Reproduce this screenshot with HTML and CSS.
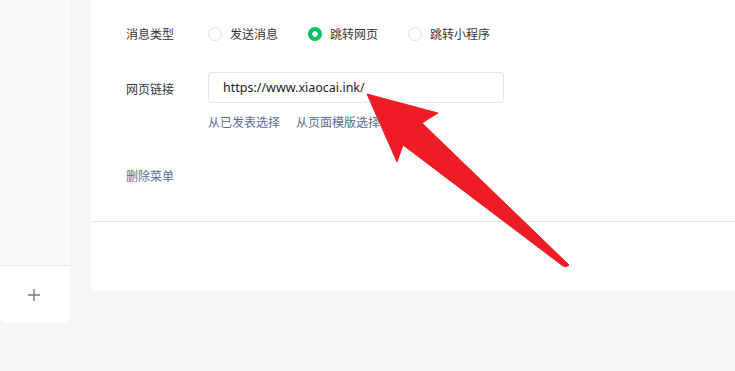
FILE: index.html
```html
<!DOCTYPE html>
<html lang="zh-CN">
<head>
    <meta charset="UTF-8">
    <meta name="viewport" content="width=device-width, initial-scale=1.0">
    <title>菜单设置</title>
    <link rel="stylesheet" href="styles.css">
</head>
<body>

<div class="page">
    <!-- 左侧菜单列 -->
    <div class="side">
        <div class="side-top"></div>
        <div class="side-add">
            <svg width="14" height="14" viewBox="0 0 14 14">
                <path d="M7 1v12M1 7h12" stroke="#7a7a7a" stroke-width="1.4" fill="none"/>
            </svg>
        </div>
    </div>

    <!-- 菜单内容编辑 -->
    <div class="card">
        <div class="form">
            <div class="row">
                <span class="label">消息类型</span>
                <div class="radios">
                    <label class="radio"><i class="dot"></i>发送消息</label>
                    <label class="radio checked"><i class="dot"></i>跳转网页</label>
                    <label class="radio"><i class="dot"></i>跳转小程序</label>
                </div>
            </div>
            <div class="row row-url">
                <span class="label label-url">网页链接</span>
                <div class="input">https://www.xiaocai.ink/</div>
            </div>
            <div class="links">
                <a class="link">从已发表选择</a>
                <a class="link">从页面模版选择</a>
            </div>
            <a class="link delete">删除菜单</a>
        </div>
        <div class="card-foot"></div>
    </div>
</div>

<!-- 标注箭头 -->
<svg class="arrow" width="735" height="371" viewBox="0 0 735 371">
    <path d="M367 94 L438 113 L422 123 L569 265 Q566 268 563 266 L403 145 L397 162 Z" fill="#ee1d25" stroke="#ee1d25" stroke-width="1" stroke-linejoin="round"/>
</svg>

</body>
</html>
```

FILE: styles.css
```css
/* 全局 */
body {
    margin: 0;
    background-color: #f5f6f7;
    font-family: "Noto Sans", "Noto Sans CJK SC", sans-serif;
    font-size: 12px;
    color: #353535;
}

.page {
    display: flex;
    align-items: flex-start;
}

/* 左侧菜单列 */
.side {
    width: 70px;
    margin-right: 21px;
    background-color: #fff;
    border-radius: 0 0 6px 6px;
    overflow: hidden;
}

.side-top {
    height: 265px;
    background-color: #fafafa;
    border-bottom: 1px solid #ebebeb;
}

.side-add {
    height: 57px;
    display: flex;
    align-items: center;
    justify-content: center;
    padding-right: 2px;
}

/* 编辑区 */
.card {
    flex: 1;
    height: 291px;
    background-color: #fff;
    border-radius: 0 0 0 6px;
}

.form {
    padding: 24px 0 35px 35px;
    border-bottom: 1px solid #e7e7eb;
}

.row {
    display: flex;
    align-items: center;
    height: 20px;
}

.row-url {
    height: 31px;
    margin-top: 28px;
}

.label {
    width: 82px;
    flex-shrink: 0;
}

.label-url {
    padding-top: 3px;
}

.radios {
    display: flex;
    gap: 30px;
}

.radio {
    display: flex;
    align-items: center;
    gap: 8px;
}

.dot {
    width: 12px;
    height: 12px;
    border: 1px solid #e0e0e0;
    border-radius: 50%;
    box-sizing: content-box;
}

.radio.checked .dot {
    width: 14px;
    height: 14px;
    border: none;
    background: radial-gradient(circle, #fff 0 2.5px, #07c160 3px);
}

.input {
    width: 280px;
    height: 29px;
    line-height: 29px;
    padding-left: 14px;
    border: 1px solid #e4e8eb;
    border-radius: 3px;
    font-size: 12.5px;
    color: #222;
}

.links {
    display: flex;
    gap: 16px;
    margin: 11px 0 0 82px;
    line-height: 18px;
}

.link {
    color: #576b95;
    cursor: pointer;
}

.delete {
    display: block;
    margin-top: 36px;
    line-height: 18px;
}

/* 标注 */
.arrow {
    position: absolute;
    left: 0;
    top: 0;
    pointer-events: none;
}
```
